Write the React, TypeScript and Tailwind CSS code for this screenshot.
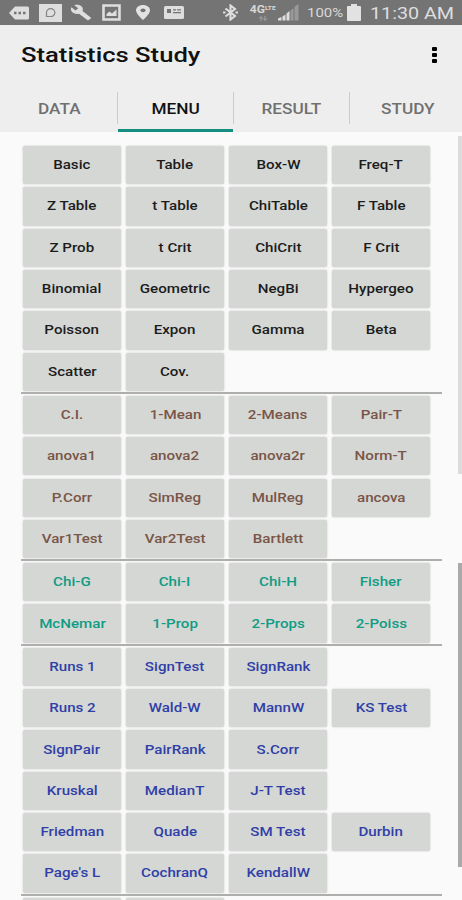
type Group = {
  color: string;
  rows: (string | null)[][];
};

const groups: Group[] = [
  {
    color: 'text-[#1c1c1c]',
    rows: [
      ['Basic', 'Table', 'Box-W', 'Freq-T'],
      ['Z Table', 't Table', 'ChiTable', 'F Table'],
      ['Z Prob', 't Crit', 'ChiCrit', 'F Crit'],
      ['Binomial', 'Geometric', 'NegBi', 'Hypergeo'],
      ['Poisson', 'Expon', 'Gamma', 'Beta'],
      ['Scatter', 'Cov.', null, null],
    ],
  },
  {
    color: 'text-[#795548]',
    rows: [
      ['C.I.', '1-Mean', '2-Means', 'Pair-T'],
      ['anova1', 'anova2', 'anova2r', 'Norm-T'],
      ['P.Corr', 'SimReg', 'MulReg', 'ancova'],
      ['Var1Test', 'Var2Test', 'Bartlett', null],
    ],
  },
  {
    color: 'text-[#109c84]',
    rows: [
      ['Chi-G', 'Chi-I', 'Chi-H', 'Fisher'],
      ['McNemar', '1-Prop', '2-Props', '2-Poiss'],
    ],
  },
  {
    color: 'text-[#303fa8]',
    rows: [
      ['Runs 1', 'SignTest', 'SignRank', null],
      ['Runs 2', 'Wald-W', 'MannW', 'KS Test'],
      ['SignPair', 'PairRank', 'S.Corr', null],
      ['Kruskal', 'MedianT', 'J-T Test', null],
      ['Friedman', 'Quade', 'SM Test', 'Durbin'],
      ["Page's L", 'CochranQ', 'KendallW', null],
    ],
  },
  {
    color: 'text-[#1c1c1c]',
    rows: [['', '', null, null]],
  },
];

const tabs = ['DATA', 'MENU', 'RESULT', 'STUDY'];

function StatusBar() {
  return (
    <div className="flex h-[25px] shrink-0 items-center bg-[#747474] text-[#d8d8d8]">
      <svg className="ml-[9px] shrink-0" width="20" height="14" viewBox="0 0 20 14">
        <path d="M6 0.5h12.5q1.5 0 1.5 1.5v10q0 1.5-1.5 1.5H6L0 7z" fill="#dedede" />
        <path d="M5 5.7h2.5v2.6H5zM9.5 5.7H12v2.6H9.5zM14 5.7h2.5v2.6H14z" fill="#747474" />
      </svg>
      <svg className="ml-[10px] shrink-0" width="23" height="18" viewBox="0 0 23 18">
        <path d="M0 0h23v18H0z" fill="#dedede" />
        <path d="M7.5 12.5V8.8a4.2 3.9 0 1 1 4 3.7z" fill="none" stroke="#858585" strokeWidth="1.2" />
      </svg>
      {/* wrench */}
      <svg className="ml-[8px] shrink-0" width="22" height="17" viewBox="0 0 24 24" preserveAspectRatio="none">
        <path
          d="M22.7 19l-9.100-9.100c.9-2.300.4-5-1.500-6.900-2-2-5-2.400-7.400-1.300L9 6 6 9 1.600 4.700C.4 7.100.9 10.100 2.900 12.100c1.900 1.900 4.600 2.400 6.900 1.500l9.100 9.100c.4.4 1 .4 1.400 0l2.300-2.300c.5-.4.5-1.100.1-1.400z"
          fill="#dedede"
        />
      </svg>
      <svg className="ml-[10px] shrink-0" width="19" height="17" viewBox="0 0 19 17">
        <path d="M1.5 1.5h16v14h-16z" fill="none" stroke="#dedede" strokeWidth="2.6" />
        <path d="M4.5 12V10l3-2.5 2.5 2 4.5-4V12z" fill="#dedede" />
      </svg>
      <svg className="ml-[15px] shrink-0" width="14" height="15" viewBox="0 0 14 15">
        <path d="M7 0C3.1 0 0 2.4 0 5.3 0 9.2 7 15 7 15s7-5.8 7-9.700C14 2.4 10.9 0 7 0z" fill="#e2e2e2" />
        <ellipse cx="7" cy="5.3" rx="2.5" ry="1.9" fill="#747474" />
      </svg>
      <svg className="ml-[14px] shrink-0" width="20" height="13" viewBox="0 0 20 13">
        <rect width="20" height="13" rx="1.5" fill="#dedede" />
        <path d="M3 3h4v4H3zM9 3.3h3v1.2H9zM13 3.3h4v1.2h-4zM9 6h8v1.2H9z" fill="#747474" />
      </svg>
      {/* bluetooth */}
      <svg className="ml-[39px] shrink-0" width="15" height="17" viewBox="0 0 15 17">
        <path
          d="M2.5 4.5 12 12 7.5 15.5V1.5L12 5 2.5 12.5"
          fill="none"
          stroke="#dedede"
          strokeWidth="2.1"
        />
        <path d="M0 7.500h2.500v2H0zM12.500 7.500H15v2h-2.500z" fill="#dedede" />
      </svg>
      <div className="ml-[13px] flex h-[17px] w-[24px] shrink-0 flex-col items-center">
        <span className="flex scale-x-[1.1] items-start text-[11px] leading-[12px] font-bold">
          4G<span className="text-[6px] leading-[8px]">LTE</span>
        </span>
        <svg width="10" height="5" viewBox="0 0 10 5">
          <path d="M3 5V1M1 2.5 3 .5l1.500 2M7 0v4M5.500 2.500 7 4.500l2-2" stroke="#a5a5a5" fill="none" />
        </svg>
      </div>
      <svg className="ml-[3px] shrink-0" width="21" height="17" viewBox="0 0 21 17">
        <path d="M0 16.5V14.5L3.5 13v3.500zM4.500 16.500v-4L7.500 10.500v6zM8.500 16.500V9.500L11.500 7v9.500z" fill="#dedede" />
        <path d="M12.5 16.5V6.5L15.5 4v12.500zM16.500 16.500V3L20.500 0v16.500z" fill="#999999" />
      </svg>
      <span className="ml-[8px] w-[36px] shrink-0 pt-px text-[13px]">
        <span className="inline-block origin-left scale-x-[1.15]">100%</span>
      </span>
      <svg className="ml-[4px] shrink-0" width="14" height="17" viewBox="0 0 14 17">
        <path d="M4 0h6v2h3q1 0 1 1v13q0 1-1 1H1q-1 0-1-1V3q0-1 1-1h3z" fill="#e2e2e2" />
      </svg>
      <span className="ml-[9px] shrink-0 pt-[3px] text-[17px] text-[#dedede]">
        <span className="inline-block origin-left scale-x-[1.16] whitespace-nowrap">11:30 AM</span>
      </span>
    </div>
  );
}

function Tabs() {
  return (
    <nav className="mt-auto ml-[2px] flex h-[48px] shrink-0">
      {tabs.map((tab, i) => {
        const isActive = tab === 'MENU';
        return (
          <div key={tab} className="flex w-[116px] shrink-0 flex-col">
            <div className="flex flex-1 items-center pt-[3px]">
              <div
                className={`flex-1 pt-[2px] text-center text-[14px] font-medium ${
                  isActive ? 'text-[#111111]' : 'text-[#707070]'
                }`}
              >
                <span className="inline-block scale-x-[1.23]">{tab}</span>
              </div>
              {i < 3 && <div className="h-[32px] w-px bg-[#cccccc]" />}
            </div>
            <div className={`mr-px h-[3px] ${isActive ? 'bg-[#148f7f]' : ''}`} />
          </div>
        );
      })}
    </nav>
  );
}

function MenuButton({ label, color }: { label: string; color: string }) {
  return (
    <button
      className={`flex h-[38.3px] items-center justify-center rounded-[2px] bg-[#d5d7d4] text-[12px] font-medium shadow-[0_0_2px_#bfc1be] ${color}`}
    >
      <span className="inline-block scale-x-[1.26] whitespace-nowrap">{label}</span>
    </button>
  );
}

export default function App() {
  return (
    <div className="flex h-[900px] w-[462px] flex-col overflow-hidden bg-[#fafafa] font-['Roboto',sans-serif]">
      <StatusBar />
      <header className="flex h-[107px] shrink-0 flex-col bg-[#eeeeee]">
        <div className="flex h-[59px] items-center justify-between pr-[25px] pl-[21px]">
          <h1 className="origin-left scale-x-[1.22] pt-[3px] text-[21px] font-medium text-[#111111]">
            Statistics Study
          </h1>
          <div className="flex flex-col gap-[2px]">
            <div className="h-1 w-[5px] rounded-[1px] bg-black" />
            <div className="h-1 w-[5px] rounded-[1px] bg-black" />
            <div className="h-1 w-[5px] rounded-[1px] bg-black" />
          </div>
        </div>
        <Tabs />
      </header>

      <div className="flex min-h-0 flex-1 justify-between">
        <main className="ml-[21px] w-[421px] pt-[14px]">
          {groups.map((group, g) => (
            <section key={g}>
              {g > 0 && <div className="-mt-[2px] mb-[2px] h-[2px] bg-[#aeafad]" />}
              {group.rows.map((row, r) => (
                <div key={r} className="ml-[2px] grid grid-cols-[repeat(4,98px)] gap-x-[5px] pb-[3.03px]">
                  {row.map((label, i) =>
                    label === null ? <div key={i} /> : <MenuButton key={i} label={label} color={group.color} />
                  )}
                </div>
              ))}
            </section>
          ))}
        </main>
        <div className="flex w-[4px] flex-col pt-[4px]">
          <div className="h-[338px] bg-[#dcdcdc]" />
          <div className="mt-[89px] h-[304px] bg-[#a9a9a9]" />
        </div>
      </div>
    </div>
  );
}
